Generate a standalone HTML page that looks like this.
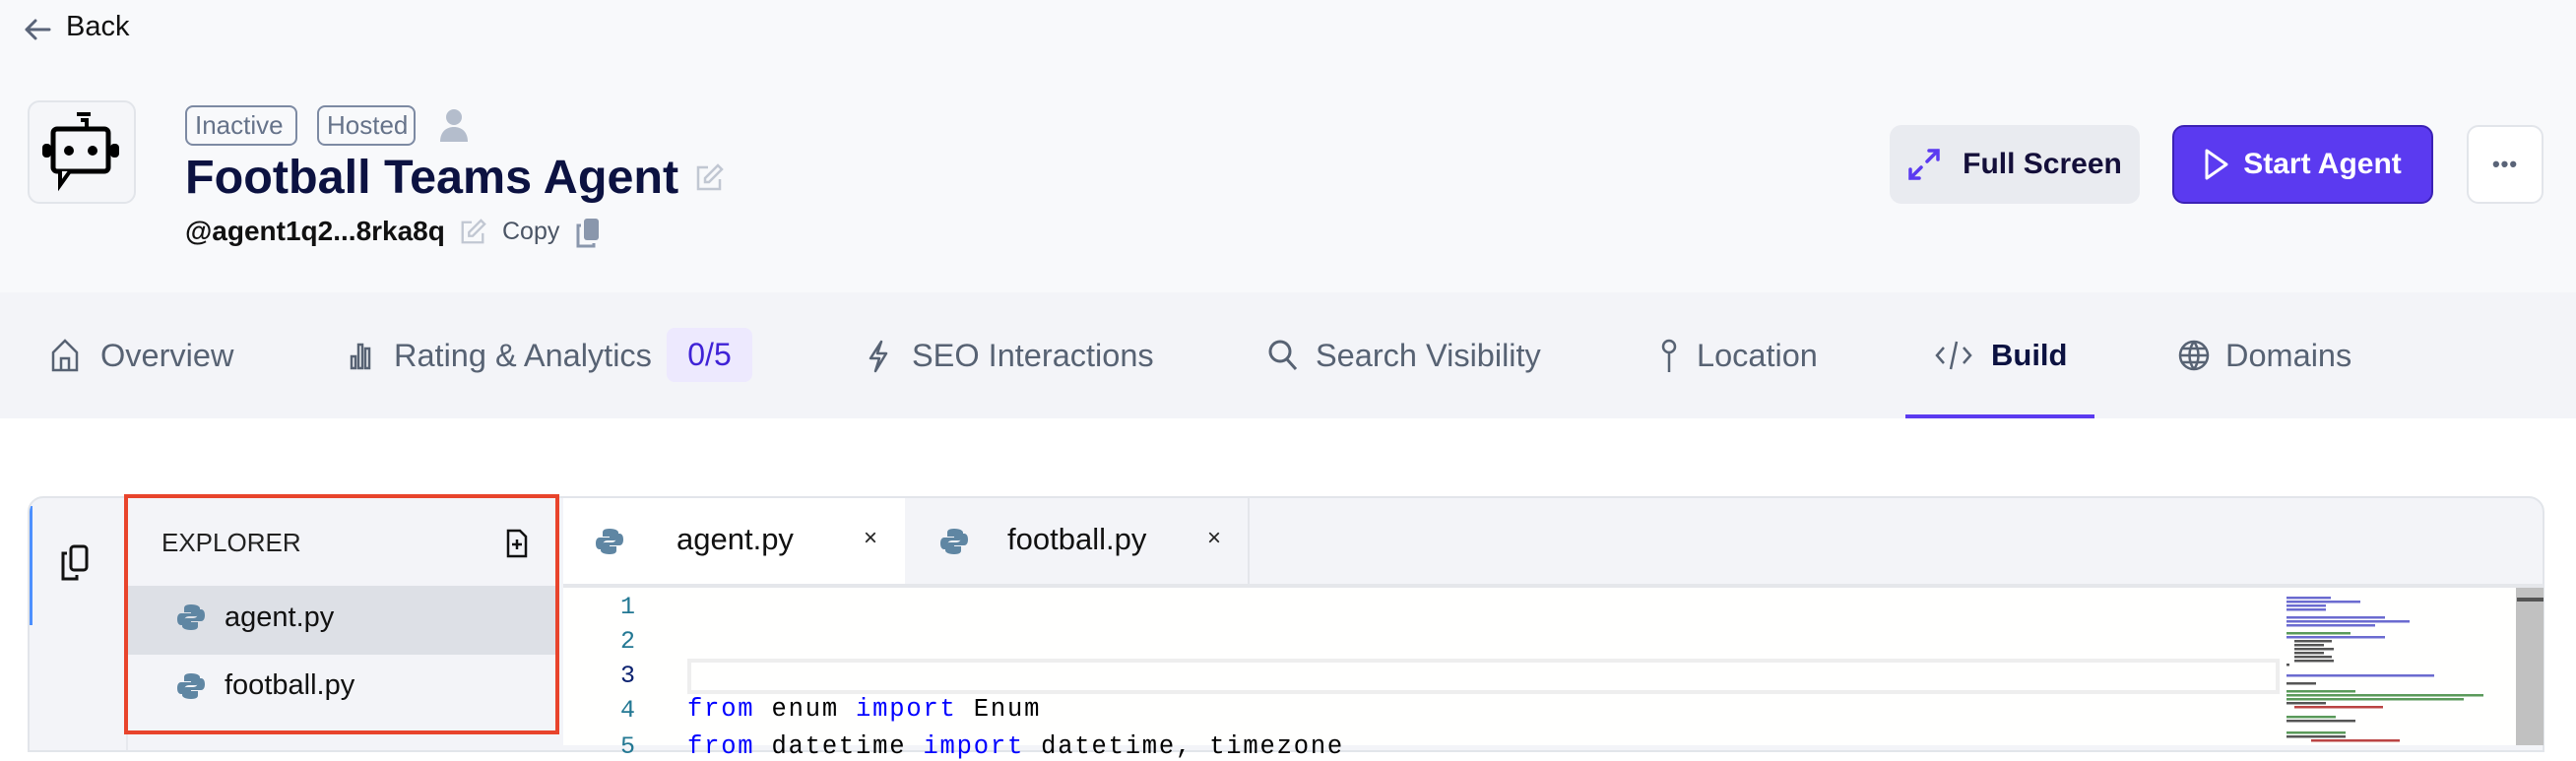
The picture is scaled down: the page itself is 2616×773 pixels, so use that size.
<!DOCTYPE html>
<html><head><meta charset="utf-8"><style>
*{box-sizing:border-box;margin:0;padding:0}
body{width:2616px;height:757px;overflow:hidden;background:#fff;font-family:"Liberation Sans",sans-serif;position:relative}
.abs{position:absolute}
.hdr{left:0;top:0;width:2616px;height:297px;background:#f8f9fb}
.tabs{left:0;top:297px;width:2616px;height:128px;background:#f3f4f8}
.tab{position:absolute;top:342px;font-size:32.5px;color:#576273;white-space:nowrap;line-height:38px}
.badge{position:absolute;top:107px;height:41px;border:2px solid #7d8aa3;border-radius:8px;color:#66738a;font-size:26px;line-height:37px;padding:0 8px;white-space:nowrap}
.btn{position:absolute;top:127px;height:80px;border-radius:12px;font-size:30px;font-weight:bold;display:flex;align-items:center;justify-content:center}
.mono{font-family:"Liberation Mono",monospace;font-size:25.5px;letter-spacing:1.8px}
.ln{position:absolute;width:40px;text-align:right;left:605px;color:#237893;font-family:"Liberation Mono",monospace;font-size:25px}
</style></head><body>
<div class="abs hdr"></div>
<svg class="abs" style="left:24px;top:18px" width="28" height="24" viewBox="0 0 28 24"><path d="M26 12H3M12 3L3 12l9 9" fill="none" stroke="#5a6478" stroke-width="3" stroke-linecap="round" stroke-linejoin="round"/></svg>
<div class="abs" style="left:67px;top:11px;font-size:29px;color:#111;font-weight:500">Back</div>
<div class="abs" style="left:28px;top:102px;width:110px;height:105px;border:2px solid #e2e5ea;border-radius:12px;background:#f5f6f9"></div>
<svg class="abs" style="left:40px;top:113px" width="86" height="82" viewBox="0 0 86 82"><path d="M38 3h14M42 9h6v8" stroke="#000" stroke-width="4" fill="none"/><rect x="14" y="18" width="56" height="43" rx="4" fill="none" stroke="#000" stroke-width="5"/><path d="M21 61l0 14 10-14" fill="#f5f6f9" stroke="#000" stroke-width="4"/><circle cx="30" cy="40" r="5"/><circle cx="54" cy="40" r="5"/><rect x="3" y="33" width="9" height="14" rx="4"/><rect x="72" y="33" width="9" height="14" rx="4"/></svg>
<div class="badge" style="left:188px;width:114px">Inactive</div>
<div class="badge" style="left:322px;width:100px">Hosted</div>
<svg class="abs" style="left:447px;top:110px" width="28" height="34" viewBox="0 0 28 34"><circle cx="14" cy="9" r="8" fill="#b4bdcc"/><path d="M0 34c0-10 6-15 14-15s14 5 14 15z" fill="#b4bdcc"/></svg>
<div class="abs" style="left:188px;top:152px;font-size:48.5px;font-weight:bold;color:#0c1241;white-space:nowrap">Football Teams Agent</div>
<svg class="abs" style="left:705px;top:166px" width="30" height="30" viewBox="0 0 30 30" fill="none" stroke="#c1c7d2" stroke-width="2.5"><path d="M14 4H4v22h22V16"/><path d="M24 2l4 4-13 13H11v-4z"/></svg>
<div class="abs" style="left:188px;top:219px;font-size:28px;font-weight:bold;color:#111;white-space:nowrap">@agent1q2...8rka8q</div>
<svg class="abs" style="left:466px;top:222px" width="28" height="28" viewBox="0 0 30 30" fill="none" stroke="#c1c7d2" stroke-width="2.5"><path d="M14 4H4v22h22V16"/><path d="M24 2l4 4-13 13H11v-4z"/></svg>
<div class="abs" style="left:510px;top:221px;font-size:25px;color:#4b5565">Copy</div>
<svg class="abs" style="left:584px;top:222px" width="26" height="30" viewBox="0 0 26 30"><rect x="9" y="0" width="15" height="22" rx="3" fill="#8a97ac"/><path d="M6 7H3v21h16v-3" fill="none" stroke="#8a97ac" stroke-width="3"/></svg>
<div class="btn" style="left:1919px;width:254px;background:#e9ebf0;color:#140f3a"><svg width="34" height="34" viewBox="0 0 34 34" style="margin-right:22px" fill="none" stroke="#5b3af0" stroke-width="3.5" stroke-linecap="round"><path d="M20 14l11-11M22 3h9v9M14 20L3 31M3 22v9h9"/></svg>Full Screen</div>
<div class="btn" style="left:2206px;width:265px;background:#5b3af0;border:2px solid #3b21b5;color:#fff"><svg width="26" height="34" viewBox="0 0 26 34" style="margin-right:14px" fill="none" stroke="#fff" stroke-width="3" stroke-linejoin="round"><path d="M3 3l20 14L3 31z"/></svg>Start Agent</div>
<div class="btn" style="left:2505px;width:78px;background:#fff;border:2px solid #e2e5ea;color:#5a6478;font-size:22px;letter-spacing:1px">•••</div>
<div class="abs tabs"></div>
<svg class="abs" style="left:51px;top:344px" width="30" height="34" viewBox="0 0 30 34" fill="none" stroke="#576273" stroke-width="2.5"><path d="M3 14L15 2l12 12v18H3z"/><path d="M11 32V20h8v12"/></svg>
<div class="tab" style="left:102px">Overview</div>
<svg class="abs" style="left:355px;top:346px" width="22" height="30" viewBox="0 0 22 30" fill="none" stroke="#576273" stroke-width="2.5"><rect x="2" y="16" width="4" height="12"/><rect x="9" y="4" width="4" height="24"/><rect x="16" y="8" width="4" height="20"/></svg>
<div class="tab" style="left:400px">Rating &amp; Analytics</div>
<div class="abs" style="left:677px;top:333px;width:87px;height:55px;background:#ede9fe;border-radius:8px;color:#3f22d6;font-size:32px;line-height:55px;text-align:center">0/5</div>
<svg class="abs" style="left:881px;top:345px" width="22" height="34" viewBox="0 0 22 34" fill="none" stroke="#576273" stroke-width="2.5" stroke-linejoin="round"><path d="M14 2L3 19h9l-4 13 11-18h-9z"/></svg>
<div class="tab" style="left:926px">SEO Interactions</div>
<svg class="abs" style="left:1287px;top:344px" width="32" height="34" viewBox="0 0 32 34" fill="none" stroke="#576273" stroke-width="3"><circle cx="13" cy="13" r="10"/><path d="M20 21l9 10"/></svg>
<div class="tab" style="left:1336px">Search Visibility</div>
<svg class="abs" style="left:1686px;top:344px" width="18" height="36" viewBox="0 0 18 36" fill="none" stroke="#576273" stroke-width="2.5"><circle cx="9" cy="8" r="6"/><path d="M9 14v20"/></svg>
<div class="tab" style="left:1723px">Location</div>
<svg class="abs" style="left:1964px;top:345px" width="40" height="32" viewBox="0 0 40 32" fill="none" stroke="#576273" stroke-width="2.5"><path d="M10 8L3 16l7 8M30 8l7 8-7 8M23 2l-6 28"/></svg>
<div class="tab" style="left:2022px;color:#0c1241;font-weight:bold;font-size:31px">Build</div>
<div class="abs" style="left:1935px;top:421px;width:192px;height:4px;background:#5b3af0"></div>
<svg class="abs" style="left:2212px;top:344px" width="32" height="34" viewBox="0 0 32 34" fill="none" stroke="#576273" stroke-width="2.5"><circle cx="16" cy="17" r="14"/><path d="M2 17h28M16 3c-6 8-6 20 0 28M16 3c6 8 6 20 0 28M4 10h24M4 24h24"/></svg>
<div class="tab" style="left:2260px">Domains</div>
<div class="abs" style="left:28px;top:504px;width:2556px;height:260px;border:2px solid #e2e5ea;border-radius:16px 16px 0 0;background:#f3f4f8;overflow:hidden">
 <div class="abs" style="left:0;top:8px;width:3px;height:121px;background:#4d90fe"></div>
 <div class="abs" style="left:98px;top:0;width:2px;height:260px;background:#e7e9ee"></div>
</div>
<svg class="abs" style="left:61px;top:552px" width="30" height="40" viewBox="0 0 30 40" fill="none" stroke="#111" stroke-width="3"><rect x="11" y="3" width="16" height="24" rx="3"/><path d="M7 10H3v26h14v-4"/></svg>
<div class="abs" style="left:126px;top:502px;width:442px;height:244px;border:4px solid #e8442c;background:#f3f4f8"></div>
<div class="abs" style="left:130px;top:595px;width:434px;height:70px;background:#dde0e6"></div>
<div class="abs" style="left:164px;top:536px;font-size:26px;color:#222">EXPLORER</div>
<svg class="abs" style="left:513px;top:537px" width="24" height="30" viewBox="0 0 24 30" fill="none" stroke="#111" stroke-width="2.5"><path d="M3 2h12l6 6v20H3z"/><path d="M12 11v10M7 16h10"/></svg>
<svg class="abs" style="left:180px;top:612px" width="28" height="30" viewBox="0 0 28 28"><path d="M14 1c-6 0-7 2-7 4v4h7v1H4c-3 0-4 3-4 6s1 6 4 6h3v-4c0-3 2-5 5-5h7c2 0 4-2 4-4V5c0-2-3-4-9-4z" fill="#5f86a3"/><path d="M14 27c6 0 7-2 7-4v-4h-7v-1h10c3 0 4-3 4-6s-1-6-4-6h-3v4c0 3-2 5-5 5H9c-2 0-4 2-4 4v4c0 2 3 4 9 4z" fill="#5f86a3"/></svg>
<div class="abs" style="left:228px;top:611px;font-size:29px;color:#111">agent.py</div>
<svg class="abs" style="left:180px;top:682px" width="28" height="30" viewBox="0 0 28 28"><path d="M14 1c-6 0-7 2-7 4v4h7v1H4c-3 0-4 3-4 6s1 6 4 6h3v-4c0-3 2-5 5-5h7c2 0 4-2 4-4V5c0-2-3-4-9-4z" fill="#5f86a3"/><path d="M14 27c6 0 7-2 7-4v-4h-7v-1h10c3 0 4-3 4-6s-1-6-4-6h-3v4c0 3-2 5-5 5H9c-2 0-4 2-4 4v4c0 2 3 4 9 4z" fill="#5f86a3"/></svg>
<div class="abs" style="left:228px;top:680px;font-size:29px;color:#111">football.py</div>
<div class="abs" style="left:572px;top:506px;width:347px;height:87px;background:#fff"></div>
<div class="abs" style="left:922px;top:506px;width:347px;height:87px;background:#f3f4f8;border-right:2px solid #e4e6eb"></div>
<svg class="abs" style="left:605px;top:535px" width="28" height="30" viewBox="0 0 28 28"><path d="M14 1c-6 0-7 2-7 4v4h7v1H4c-3 0-4 3-4 6s1 6 4 6h3v-4c0-3 2-5 5-5h7c2 0 4-2 4-4V5c0-2-3-4-9-4z" fill="#5f86a3"/><path d="M14 27c6 0 7-2 7-4v-4h-7v-1h10c3 0 4-3 4-6s-1-6-4-6h-3v4c0 3-2 5-5 5H9c-2 0-4 2-4 4v4c0 2 3 4 9 4z" fill="#5f86a3"/></svg>
<div class="abs" style="left:687px;top:530px;font-size:31px;color:#111">agent.py</div>
<div class="abs" style="left:877px;top:533px;font-size:24px;color:#222">×</div>
<svg class="abs" style="left:955px;top:535px" width="28" height="30" viewBox="0 0 28 28"><path d="M14 1c-6 0-7 2-7 4v4h7v1H4c-3 0-4 3-4 6s1 6 4 6h3v-4c0-3 2-5 5-5h7c2 0 4-2 4-4V5c0-2-3-4-9-4z" fill="#5f86a3"/><path d="M14 27c6 0 7-2 7-4v-4h-7v-1h10c3 0 4-3 4-6s-1-6-4-6h-3v4c0 3-2 5-5 5H9c-2 0-4 2-4 4v4c0 2 3 4 9 4z" fill="#5f86a3"/></svg>
<div class="abs" style="left:1023px;top:530px;font-size:31px;color:#111">football.py</div>
<div class="abs" style="left:1226px;top:533px;font-size:24px;color:#222">×</div>
<div class="abs" style="left:572px;top:593px;width:2011px;height:4px;background:#e5e7eb"></div>
<div class="abs" style="left:572px;top:597px;width:1983px;height:160px;background:#fffffe"></div>
<div class="abs" style="left:698px;top:669px;width:1617px;height:36px;border:4px solid #eeeeee"></div>
<div class="ln" style="top:602px">1</div>
<div class="ln" style="top:637px">2</div>
<div class="ln" style="top:672px;color:#0b216f">3</div>
<div class="ln" style="top:707px">4</div>
<div class="ln" style="top:744px">5</div>
<div class="abs mono" style="left:698px;top:706px;white-space:pre;color:#000"><span style="color:#0000ff">from</span> enum <span style="color:#0000ff">import</span> Enum</div>
<div class="abs mono" style="left:698px;top:744px;white-space:pre;color:#000"><span style="color:#0000ff">from</span> datetime <span style="color:#0000ff">import</span> datetime, timezone</div>
<svg class="abs" style="left:2322px;top:606px" width="230" height="151" viewBox="0 0 230 151">
<g fill="#6b6bd0"><rect x="0" y="0" width="45" height="2.5"/><rect x="0" y="4" width="75" height="2.5"/><rect x="0" y="8" width="40" height="2.5"/><rect x="0" y="12" width="40" height="2.5"/>
<rect x="0" y="20" width="100" height="2.5"/><rect x="0" y="24" width="125" height="2.5"/><rect x="0" y="28" width="90" height="2.5"/>
<rect x="0" y="40" width="100" height="2.5"/><rect x="0" y="79" width="150" height="2.5"/></g>
<g fill="#555"><rect x="8" y="44" width="38" height="2.5"/><rect x="8" y="48" width="30" height="2.5"/><rect x="8" y="52" width="40" height="2.5"/><rect x="8" y="56" width="30" height="2.5"/><rect x="8" y="60" width="38" height="2.5"/><rect x="8" y="64" width="40" height="2.5"/><rect x="0" y="68" width="3" height="2.5"/><rect x="0" y="87" width="30" height="2.5"/><rect x="0" y="107" width="40" height="2.5"/><rect x="0" y="125" width="70" height="2.5"/><rect x="0" y="141" width="60" height="2.5"/></g>
<g fill="#5a9a5a"><rect x="0" y="36" width="65" height="2.5"/><rect x="0" y="95" width="70" height="2.5"/><rect x="0" y="99" width="200" height="2.5"/><rect x="0" y="103" width="180" height="2.5"/><rect x="0" y="121" width="50" height="2.5"/><rect x="0" y="137" width="60" height="2.5"/></g>
<g fill="#b44"><rect x="8" y="111" width="90" height="2.5"/><rect x="25" y="145" width="90" height="2.5"/></g>
</svg>
<div class="abs" style="left:2555px;top:597px;width:28px;height:160px;background:#c1c1c1"></div>
<div class="abs" style="left:2556px;top:607px;width:27px;height:4px;background:#555"></div>
</body></html>
